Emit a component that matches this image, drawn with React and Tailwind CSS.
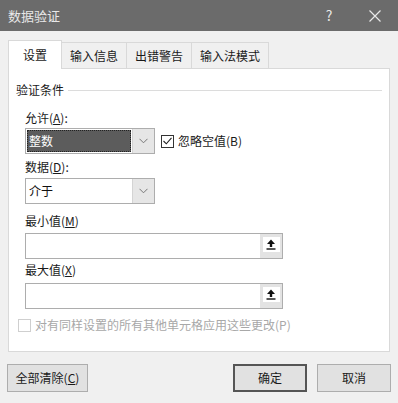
import React from "react";

const font = { fontFamily: '"Noto Sans CJK SC", "Microsoft YaHei", "Liberation Sans", sans-serif' };

const Chevron = () => (
    <svg width="9" height="6" viewBox="0 0 9 6" fill="none">
        <path d="M0.5 0.8 L4.5 4.8 L8.5 0.8" stroke="#777" strokeWidth="1" />
    </svg>
);

const UpArrow = () => (
    <svg width="10" height="11" viewBox="0 0 10 11">
        <path d="M5 0.5 L9 5 L6.2 5 L6.2 8 L3.8 8 L3.8 5 L1 5 Z" fill="#111" />
        <rect x="0.5" y="9.3" width="9" height="1.4" fill="#111" />
    </svg>
);

const Select = ({ value, focused }) => (
    <div className="flex h-[26px] w-[130px] border border-[#adadad] bg-white">
        <div className="flex-1 p-[1px]">
            <div
                className={`flex h-full items-center px-[2px] text-[12px] ${focused
                    ? "bg-[#5c5c5c] text-white outline-1 outline-dotted outline-[#222] -outline-offset-1"
                    : "text-[#111]"
                    }`}
            >
                {value}
            </div>
        </div>
        <div className="flex w-[22px] items-center justify-center border-l border-[#d4d4d4] bg-[#e6e6e6]">
            <Chevron />
        </div>
    </div>
);

const RangeInput = () => (
    <div className="flex h-[26px] w-[258px] border border-[#adadad] bg-white">
        <div className="flex-1" />
        <div className="flex w-[22px] items-start justify-center bg-[#e3e3e3] pt-[3px]">
            <div className="flex h-[15px] w-[17px] items-center justify-center bg-white">
                <UpArrow />
            </div>
        </div>
    </div>
);

const App = () => {
    const tabs = ["设置", "输入信息", "出错警告", "输入法模式"];

    return (
        <div className="h-[403px] w-[398px] overflow-hidden bg-[#f0f0f0] text-[#1a1a1a]" style={font}>
            {/* Title bar */}
            <div className="flex h-[31px] items-center bg-[#6b6b6b] pl-[8px] text-[#e8e8e8]">
                <span className="flex-1 text-[13px]">数据验证</span>
                <span className="w-[46px] text-center text-[14px]">?</span>
                <span className="flex w-[46px] justify-center">
                    <svg width="12" height="12" viewBox="0 0 12 12">
                        <path d="M0.5 0.5 L11.5 11.5 M11.5 0.5 L0.5 11.5" stroke="#e8e8e8" strokeWidth="1.2" />
                    </svg>
                </span>
            </div>

            {/* Tabs */}
            <div className="ml-[8px] mt-[9px] flex h-[28px] items-end">
                {tabs.map((tab, i) =>
                    i === 0 ? (
                        <div
                            key={tab}
                            className="relative z-10 -mb-px flex h-[29px] w-[54px] items-center justify-center border border-b-0 border-[#d9d9d9] bg-white text-[12px]"
                        >
                            {tab}
                        </div>
                    ) : (
                        <div
                            key={tab}
                            className="flex h-[26px] items-center border border-b-0 border-l-0 border-[#d9d9d9] bg-[#f0f0f0] px-[8px] text-[12px]"
                        >
                            {tab}
                        </div>
                    )
                )}
            </div>

            {/* Panel */}
            <div className="mx-[8px] h-[284px] border border-[#d9d9d9] bg-white pl-[7px] pr-[7px]">
                <div className="mt-[12px] flex items-center gap-[4px] text-[12px]">
                    <span>验证条件</span>
                    <div className="h-px flex-1 bg-[#dcdcdc]" />
                </div>

                <div className="pl-[9px]">
                    <div className="mt-[11px] text-[12px] leading-[16px]">
                        允许(<span className="underline">A</span>):
                    </div>
                    <div className="mt-[2px] flex items-center gap-[6px]">
                        <Select value="整数" focused />
                        <div className="flex items-center gap-[4px] text-[12px]">
                            <div className="flex h-[13px] w-[13px] items-center justify-center border border-[#333] bg-white">
                                <svg width="9" height="8" viewBox="0 0 9 8">
                                    <path d="M0.5 4 L3.3 6.8 L8.5 0.8" stroke="#222" strokeWidth="1.1" fill="none" />
                                </svg>
                            </div>
                            <span>忽略空值(B)</span>
                        </div>
                    </div>

                    <div className="mt-[5px] text-[12px] leading-[16px]">
                        数据(<span className="underline">D</span>):
                    </div>
                    <div className="mt-[3px]">
                        <Select value="介于" />
                    </div>

                    <div className="mt-[9px] text-[12px] leading-[16px]">
                        最小值(<span className="underline">M</span>)
                    </div>
                    <div className="mt-[4px]">
                        <RangeInput />
                    </div>

                    <div className="mt-[3px] text-[12px] leading-[16px]">
                        最大值(<span className="underline">X</span>)
                    </div>
                    <div className="mt-[5px]">
                        <RangeInput />
                    </div>
                </div>

                <div className="mt-[7px] flex items-center gap-[4px] pl-[2px] text-[12px] text-[#a8a8a8]">
                    <div className="h-[13px] w-[13px] border border-[#cfcfcf] bg-white" />
                    <span>对有同样设置的所有其他单元格应用这些更改(P)</span>
                </div>
            </div>

            {/* Buttons */}
            <div className="mx-[7px] mt-[12px] flex items-center">
                <button className="h-[28px] w-[81px] border border-[#adadad] bg-[#e1e1e1] text-[12px]">
                    全部清除(<span className="underline">C</span>)
                </button>
                <div className="flex-1" />
                <button className="h-[28px] w-[74px] border-2 border-[#555] bg-[#e1e1e1] text-[12px]">
                    确定
                </button>
                <button className="ml-[10px] h-[28px] w-[74px] border border-[#adadad] bg-[#e1e1e1] text-[12px]">
                    取消
                </button>
            </div>
        </div>
    );
};

export default App;
